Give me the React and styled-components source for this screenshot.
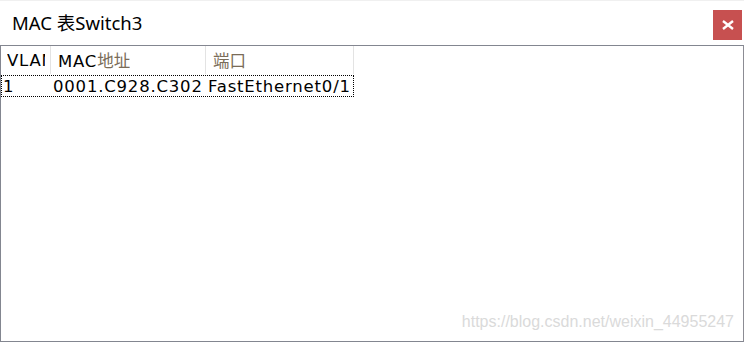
import React from "react";
import styled, { createGlobalStyle } from "styled-components";

const GlobalStyle = createGlobalStyle`
  html, body {
    margin: 0;
    padding: 0;
    background: #ffffff;
  }
  body {
    font-family: "Noto Sans", "Noto Sans CJK SC", sans-serif;
  }
`;

const Window = styled.div`
  width: 744px;
  height: 342px;
  display: flex;
  flex-direction: column;
  box-sizing: border-box;
  border-top: 1px solid #f0f0f0;
  background: #ffffff;
`;

const TitleBar = styled.div`
  height: 44px;
  display: flex;
  align-items: center;
  justify-content: space-between;
  padding-left: 12px;
  padding-right: 2px;
`;

const Title = styled.div`
  font-size: 18.5px;
  color: #000000;
  padding-bottom: 2px;
`;

const CloseButton = styled.button`
  width: 29px;
  height: 30px;
  margin-top: 4px;
  border: none;
  padding: 0;
  background: #c75050;
  display: flex;
  align-items: center;
  justify-content: center;
  cursor: pointer;
`;

const TableFrame = styled.div`
  position: relative;
  flex: 1;
  border: 1px solid #838690;
  border-right-color: #8c8c94;
  overflow: hidden;
`;

const Grid = styled.div`
  display: grid;
  grid-template-columns: 50px 155px 148px;
  width: 353px;
  font-family: "DejaVu Sans", "Noto Sans CJK SC", sans-serif;
  font-size: 16.5px;
  letter-spacing: 0.8px;
  color: #000000;
`;

const HeadCell = styled.div`
  height: 28px;
  display: flex;
  align-items: center;
  padding-left: ${(p) => p.$pad || 6}px;
  border-right: 1px solid #e3e3e3;
  white-space: nowrap;
  overflow: hidden;
`;

const HeadText = styled.span`
  display: block;
  overflow: hidden;
  max-width: ${(p) => (p.$clip ? `${p.$clip}px` : "none")};
`;

const Cjk = styled.span`
  font-family: "Noto Sans CJK SC", sans-serif;
  color: #7a6c58;
  letter-spacing: 0;
`;

const Row = styled.div`
  grid-column: 1 / -1;
  display: grid;
  grid-template-columns: 50px 155px 148px;
  height: 22px;
  margin-top: 1px;
  outline: 1px dotted #000000;
  outline-offset: -1px;
`;

const Cell = styled.div`
  display: flex;
  align-items: center;
  padding-left: ${(p) => p.$pad || 2}px;
  white-space: nowrap;
  overflow: hidden;
`;

const Watermark = styled.div`
  position: absolute;
  right: 9px;
  bottom: 10px;
  font-family: "Liberation Sans", Arial, sans-serif;
  font-size: 16px;
  color: #dadada;
`;

export default function App() {
  return (
    <>
      <GlobalStyle />
      <Window>
        <TitleBar>
          <Title>MAC 表Switch3</Title>
          <CloseButton aria-label="close">
            <svg width="12" height="10" viewBox="0 0 12 10">
              <path d="M1 1 L11 9 M11 1 L1 9" stroke="#ffffff" strokeWidth="2.4" />
            </svg>
          </CloseButton>
        </TitleBar>
        <TableFrame>
          <Grid>
            <HeadCell $pad={6}>
              <HeadText $clip={38}>VLAN</HeadText>
            </HeadCell>
            <HeadCell $pad={7}>
              <HeadText>
                MAC<Cjk>地址</Cjk>
              </HeadText>
            </HeadCell>
            <HeadCell $pad={7}>
              <HeadText>
                <Cjk>端口</Cjk>
              </HeadText>
            </HeadCell>
            <Row>
              <Cell $pad={2}>1</Cell>
              <Cell $pad={2}>0001.C928.C302</Cell>
              <Cell $pad={2}>FastEthernet0/1</Cell>
            </Row>
          </Grid>
          <Watermark>https://blog.csdn.net/weixin_44955247</Watermark>
        </TableFrame>
      </Window>
    </>
  );
}
